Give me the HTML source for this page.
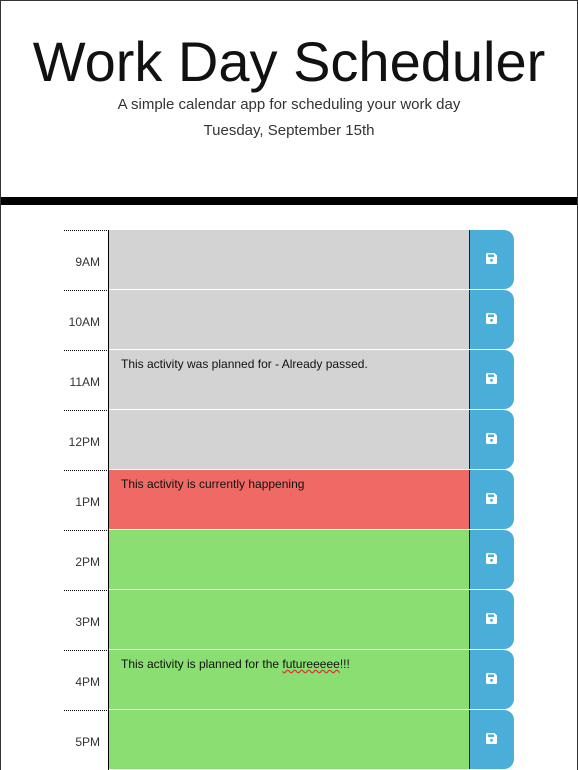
<!DOCTYPE html>
<html><head><meta charset="utf-8"><style>
*{box-sizing:border-box;margin:0;padding:0}
html,body{width:578px;height:770px;overflow:hidden;background:#fff;font-family:"Liberation Sans",sans-serif}
.frame{position:absolute;left:0;top:0;width:578px;height:770px;border:1px solid #333;border-bottom:none}
h1{position:absolute;left:0;width:578px;top:29px;text-align:center;font-weight:normal;font-size:56px;line-height:66px;color:#111;letter-spacing:0}
.sub{position:absolute;left:0;width:578px;top:96px;text-align:center;font-size:15px;color:#333}
.date{position:absolute;left:0;width:578px;top:122px;text-align:center;font-size:15px;color:#333}
.bar{position:absolute;left:1px;width:576px;top:197px;height:8px;background:#000}
.row{position:absolute;left:64px;height:60px;width:450px}
.hour{position:absolute;left:0;top:0;width:45px;height:60px;border-top:1px dotted #000;border-right:1px solid #000;font-size:12px;color:#333;text-align:right;padding-right:8px;padding-top:24px}
.ta{position:absolute;left:45px;top:0;width:360px;height:60px;border-bottom:1px solid #fff;font-size:12px;color:#111;padding:7px 12px}
.btn{position:absolute;left:405px;top:0;width:45px;height:59px;background:#4aaed9;border-left:1px solid #222;border-radius:0 10px 10px 0}
.btn svg{position:absolute;left:16px;top:23px}
.past{background:#d3d3d3}.present{background:#f06a65}.future{background:#8bde72}
</style></head><body>
<div class="frame"></div>
<h1>Work Day Scheduler</h1>
<div class="sub">A simple calendar app for scheduling your work day</div>
<div class="date">Tuesday, September 15th</div>
<div class="bar"></div>

<div class="row" style="top:230px"><div class="hour">9AM</div><div class="ta past"></div><div class="btn"><svg width="11" height="11" viewBox="0 0 11 11"><path d="M0 1.5Q0 0 1.5 0H8.5L11 2.5V9.5Q11 11 9.5 11H1.5Q0 11 0 9.5Z" fill="#fff"/><rect x="2" y="1.5" width="6" height="2.5" fill="#4aaed9"/><circle cx="5.5" cy="7.3" r="1.4" fill="#4aaed9"/></svg></div></div>
<div class="row" style="top:290px"><div class="hour">10AM</div><div class="ta past"></div><div class="btn"><svg width="11" height="11" viewBox="0 0 11 11"><path d="M0 1.5Q0 0 1.5 0H8.5L11 2.5V9.5Q11 11 9.5 11H1.5Q0 11 0 9.5Z" fill="#fff"/><rect x="2" y="1.5" width="6" height="2.5" fill="#4aaed9"/><circle cx="5.5" cy="7.3" r="1.4" fill="#4aaed9"/></svg></div></div>
<div class="row" style="top:350px"><div class="hour">11AM</div><div class="ta past">This activity was planned for - Already passed.</div><div class="btn"><svg width="11" height="11" viewBox="0 0 11 11"><path d="M0 1.5Q0 0 1.5 0H8.5L11 2.5V9.5Q11 11 9.5 11H1.5Q0 11 0 9.5Z" fill="#fff"/><rect x="2" y="1.5" width="6" height="2.5" fill="#4aaed9"/><circle cx="5.5" cy="7.3" r="1.4" fill="#4aaed9"/></svg></div></div>
<div class="row" style="top:410px"><div class="hour">12PM</div><div class="ta past"></div><div class="btn"><svg width="11" height="11" viewBox="0 0 11 11"><path d="M0 1.5Q0 0 1.5 0H8.5L11 2.5V9.5Q11 11 9.5 11H1.5Q0 11 0 9.5Z" fill="#fff"/><rect x="2" y="1.5" width="6" height="2.5" fill="#4aaed9"/><circle cx="5.5" cy="7.3" r="1.4" fill="#4aaed9"/></svg></div></div>
<div class="row" style="top:470px"><div class="hour">1PM</div><div class="ta present">This activity is currently happening</div><div class="btn"><svg width="11" height="11" viewBox="0 0 11 11"><path d="M0 1.5Q0 0 1.5 0H8.5L11 2.5V9.5Q11 11 9.5 11H1.5Q0 11 0 9.5Z" fill="#fff"/><rect x="2" y="1.5" width="6" height="2.5" fill="#4aaed9"/><circle cx="5.5" cy="7.3" r="1.4" fill="#4aaed9"/></svg></div></div>
<div class="row" style="top:530px"><div class="hour">2PM</div><div class="ta future"></div><div class="btn"><svg width="11" height="11" viewBox="0 0 11 11"><path d="M0 1.5Q0 0 1.5 0H8.5L11 2.5V9.5Q11 11 9.5 11H1.5Q0 11 0 9.5Z" fill="#fff"/><rect x="2" y="1.5" width="6" height="2.5" fill="#4aaed9"/><circle cx="5.5" cy="7.3" r="1.4" fill="#4aaed9"/></svg></div></div>
<div class="row" style="top:590px"><div class="hour">3PM</div><div class="ta future"></div><div class="btn"><svg width="11" height="11" viewBox="0 0 11 11"><path d="M0 1.5Q0 0 1.5 0H8.5L11 2.5V9.5Q11 11 9.5 11H1.5Q0 11 0 9.5Z" fill="#fff"/><rect x="2" y="1.5" width="6" height="2.5" fill="#4aaed9"/><circle cx="5.5" cy="7.3" r="1.4" fill="#4aaed9"/></svg></div></div>
<div class="row" style="top:650px"><div class="hour">4PM</div><div class="ta future">This activity is planned for the <span style="text-decoration:underline wavy #d33">futureeeee</span>!!!</div><div class="btn"><svg width="11" height="11" viewBox="0 0 11 11"><path d="M0 1.5Q0 0 1.5 0H8.5L11 2.5V9.5Q11 11 9.5 11H1.5Q0 11 0 9.5Z" fill="#fff"/><rect x="2" y="1.5" width="6" height="2.5" fill="#4aaed9"/><circle cx="5.5" cy="7.3" r="1.4" fill="#4aaed9"/></svg></div></div>
<div class="row" style="top:710px"><div class="hour">5PM</div><div class="ta future"></div><div class="btn"><svg width="11" height="11" viewBox="0 0 11 11"><path d="M0 1.5Q0 0 1.5 0H8.5L11 2.5V9.5Q11 11 9.5 11H1.5Q0 11 0 9.5Z" fill="#fff"/><rect x="2" y="1.5" width="6" height="2.5" fill="#4aaed9"/><circle cx="5.5" cy="7.3" r="1.4" fill="#4aaed9"/></svg></div></div>
</body></html>
